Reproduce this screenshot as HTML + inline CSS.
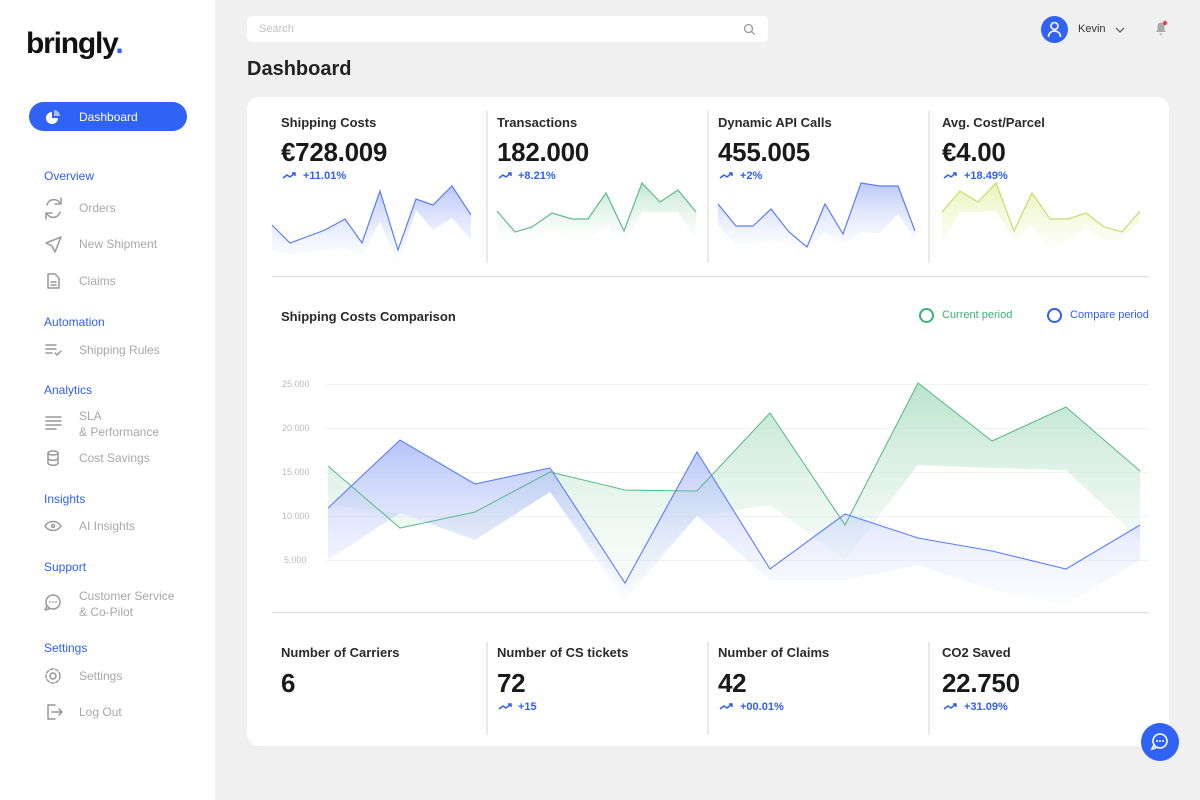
<!DOCTYPE html>
<html><head><meta charset="utf-8"><style>
*{margin:0;padding:0;box-sizing:border-box}
body{width:1200px;height:800px;background:#f0f0f0;font-family:"Liberation Sans",sans-serif;position:relative;overflow:hidden;color:#1a1a1a}
.a{position:absolute;white-space:nowrap}
.side{position:absolute;left:0;top:0;width:215px;height:800px;background:#fff}
.h{color:#2f5ff5;font-size:12px;left:44px}
.it{color:#a8a8a8;font-size:12px;left:79px}
.t{font-size:13px;font-weight:bold;color:#2a2a2a}
.big{font-size:26px;font-weight:bold;color:#1a1a1a;letter-spacing:-0.3px}
.pct{font-size:11px;font-weight:bold;color:#2f5ff5}
</style></head><body>
<div class="side">
<div class="a" style="left:26px;top:27px;font-size:30px;font-weight:bold;letter-spacing:-1.2px;color:#111">bringly<span style="color:#2f5ff5">.</span></div>
<div class="a" style="left:29px;top:102px;width:158px;height:29px;border-radius:15px;background:#2f62f5"></div>
<svg class="a" style="left:44px;top:108px" width="18" height="18" viewBox="0 0 18 18"><path d="M8 4A6 6 0 1 0 14 10H8Z" fill="#fff"/><path d="M10 2A6 6 0 0 1 16 8H10Z" fill="#a9bcfb"/></svg>
<div class="a" style="left:79px;top:110px;font-size:12px;color:#fff">Dashboard</div>
<div class="a h" style="top:169px">Overview</div>
<div class="a it" style="top:201px">Orders</div>
<div class="a it" style="top:237px">New Shipment</div>
<div class="a it" style="top:274px">Claims</div>
<div class="a h" style="top:315px">Automation</div>
<div class="a it" style="top:343px">Shipping Rules</div>
<div class="a h" style="top:383px">Analytics</div>
<div class="a it" style="top:408px;line-height:16px">SLA<br>&amp; Performance</div>
<div class="a it" style="top:451px">Cost Savings</div>
<div class="a h" style="top:492px">Insights</div>
<div class="a it" style="top:519px">AI Insights</div>
<div class="a h" style="top:560px">Support</div>
<div class="a it" style="top:588px;line-height:16px">Customer Service<br>&amp; Co-Pilot</div>
<div class="a h" style="top:641px">Settings</div>
<div class="a it" style="top:669px">Settings</div>
<div class="a it" style="top:705px">Log Out</div>
<svg class="a" style="left:0;top:0" width="215" height="800" fill="none" stroke="#999" stroke-width="1.5" stroke-linecap="round" stroke-linejoin="round">
<path d="M47 205a7 7 0 0 1 12-3l2 2M61 198v6h-6M60 212a7 7 0 0 1-12 3l-2-2M46 219v-6h6"/>
<path d="M46 243l15-6-6 15-3-6z"/>
<path d="M48 274h7l4 4v10h-11z M51 282h5M51 285h5"/>
<path d="M46 345h10M46 349h10M46 353h6M55 353l2 2 4-4"/>
<path d="M46 417h15M46 421h15M46 425h15M46 429h10"/>
<ellipse cx="53" cy="453" rx="5" ry="2"/><path d="M48 453v10c0 3 10 3 10 0v-10M48 458c0 3 10 3 10 0"/>
<path d="M45 526c4-6 12-6 16 0c-4 6-12 6-16 0z"/><circle cx="53" cy="526" r="1.5"/>
<circle cx="53" cy="602" r="7"/><path d="M47 606l-2 4 4-1"/>
<circle cx="53" cy="676" r="3"/><circle cx="53" cy="676" r="7" stroke-dasharray="3 2"/>
<path d="M55 705h-7v14h7M52 712h10M59 709l3 3-3 3"/>
</svg>
<svg class="a" style="left:0;top:0" width="215" height="800" fill="#999"><circle cx="50" cy="602" r=".9"/><circle cx="53" cy="602" r=".9"/><circle cx="56" cy="602" r=".9"/></svg>
</div>

<div class="a" style="left:247px;top:16px;width:521px;height:26px;background:#fff;border-radius:5px"></div>
<div class="a" style="left:259px;top:23px;font-size:11px;color:#c2c2c2">Search</div>
<svg class="a" style="left:743px;top:23px" width="13" height="13" fill="none" stroke="#999" stroke-width="1.3"><circle cx="5.5" cy="5.5" r="4"/><path d="M8.5 8.5l3 3"/></svg>
<div class="a" style="left:1041px;top:16px;width:27px;height:27px;border-radius:50%;background:#2f62f5"></div>
<svg class="a" style="left:1041px;top:16px" width="27" height="27" fill="none" stroke="#fff" stroke-width="1.6"><circle cx="13.5" cy="10" r="3.5"/><path d="M7.5 21c0-4 3-6 6-6s6 2 6 6"/></svg>
<div class="a" style="left:1078px;top:23px;font-size:11px;color:#333">Kevin</div>
<svg class="a" style="left:1115px;top:26px" width="11" height="8" fill="none" stroke="#666" stroke-width="1.3"><path d="M1 2l4 4 4-4"/></svg>
<svg class="a" style="left:1153px;top:19px" width="16" height="18"><path d="M3 13h10l-1.5-2V7a3.5 3.5 0 0 0-7 0v4z M6.5 14.5a1.5 1.5 0 0 0 3 0z" fill="#aaa"/><circle cx="12" cy="4" r="2.2" fill="#f0434a"/></svg>

<div class="a" style="left:247px;top:58px;font-size:20px;font-weight:bold;color:#222">Dashboard</div>

<div class="a" style="left:247px;top:97px;width:922px;height:649px;background:#fff;border-radius:12px"></div>

<div class="a t" style="left:281px;top:115px">Shipping Costs</div>
<div class="a t" style="left:497px;top:115px">Transactions</div>
<div class="a t" style="left:718px;top:115px">Dynamic API Calls</div>
<div class="a t" style="left:942px;top:115px">Avg. Cost/Parcel</div>
<div class="a big" style="left:281px;top:137px">€728.009</div>
<div class="a big" style="left:497px;top:137px">182.000</div>
<div class="a big" style="left:718px;top:137px">455.005</div>
<div class="a big" style="left:942px;top:137px">€4.00</div>
<div class="a pct" style="left:303px;top:170px">+11.01%</div>
<div class="a pct" style="left:518px;top:170px">+8.21%</div>
<div class="a pct" style="left:740px;top:170px">+2%</div>
<div class="a pct" style="left:964px;top:170px">+18.49%</div>

<div class="a t" style="left:281px;top:309px">Shipping Costs Comparison</div>
<div class="a" style="left:919px;top:308px;width:15px;height:15px;border-radius:50%;border:2px solid #3fae78"></div>
<div class="a" style="left:942px;top:309px;font-size:11px;color:#3fae78">Current period</div>
<div class="a" style="left:1047px;top:308px;width:15px;height:15px;border-radius:50%;border:2px solid #2f5ff5"></div>
<div class="a" style="left:1070px;top:309px;font-size:11px;color:#2f5ff5">Compare period</div>
<div class="a" style="left:282px;top:379px;font-size:9px;color:#bbb;line-height:11px">25.000</div>
<div class="a" style="left:282px;top:423px;font-size:9px;color:#bbb">20.000</div>
<div class="a" style="left:282px;top:467px;font-size:9px;color:#bbb">15.000</div>
<div class="a" style="left:282px;top:511px;font-size:9px;color:#bbb">10.000</div>
<div class="a" style="left:284px;top:555px;font-size:9px;color:#bbb">5.000</div>

<div class="a t" style="left:281px;top:645px">Number of Carriers</div>
<div class="a t" style="left:497px;top:645px">Number of CS tickets</div>
<div class="a t" style="left:718px;top:645px">Number of Claims</div>
<div class="a t" style="left:942px;top:645px">CO2 Saved</div>
<div class="a big" style="left:281px;top:668px">6</div>
<div class="a big" style="left:497px;top:668px">72</div>
<div class="a big" style="left:718px;top:668px">42</div>
<div class="a big" style="left:942px;top:668px">22.750</div>
<div class="a pct" style="left:518px;top:701px">+15</div>
<div class="a pct" style="left:740px;top:701px">+00.01%</div>
<div class="a pct" style="left:964px;top:701px">+31.09%</div>

<svg class="a" style="left:0;top:0" width="1200" height="800">
<defs>
<linearGradient id="gb" x1="0" y1="0" x2="0" y2="1"><stop offset="0" stop-color="#8ea4f7" stop-opacity=".6"/><stop offset="1" stop-color="#c8d3fb" stop-opacity="0"/></linearGradient>
<linearGradient id="gg" x1="0" y1="0" x2="0" y2="1"><stop offset="0" stop-color="#8fcfa9" stop-opacity=".55"/><stop offset="1" stop-color="#d8efe2" stop-opacity="0"/></linearGradient>
<linearGradient id="gy" x1="0" y1="0" x2="0" y2="1"><stop offset="0" stop-color="#d9ec8c" stop-opacity=".6"/><stop offset="1" stop-color="#eef7c9" stop-opacity=".1"/></linearGradient>
<linearGradient id="gb2" x1="0" y1="0" x2="0" y2="1"><stop offset="0" stop-color="#a8b8f9" stop-opacity=".85"/><stop offset="1" stop-color="#dfe5fd" stop-opacity=".1"/></linearGradient>
<linearGradient id="gg2" x1="0" y1="0" x2="0" y2="1"><stop offset="0" stop-color="#a9dcbf" stop-opacity=".8"/><stop offset="1" stop-color="#e9f6ee" stop-opacity=".2"/></linearGradient>
</defs>
<g stroke="#e2e2e2" stroke-width="1.5"><path d="M272 276.5H1149M272 612.5H1149M487 111V263M708 111V263M929 111V263M487 642V735M708 642V735M929 642V735"/></g>
<g stroke="#f3f3f3"><path d="M325 384.5H1149M325 428.5H1149M325 472.5H1149M325 516.5H1149M325 560.5H1149"/></g>
<g fill="none" stroke="#2f5ff5" stroke-width="1.5"><path d="M283 178l4-3 3 2 5-4M292 173h3v3"/><path d="M499 178l4-3 3 2 5-4M508 173h3v3"/><path d="M720 178l4-3 3 2 5-4M729 173h3v3"/><path d="M944 178l4-3 3 2 5-4M953 173h3v3"/><path d="M499 709l4-3 3 2 5-4M508 704h3v3"/><path d="M720 709l4-3 3 2 5-4M729 704h3v3"/><path d="M944 709l4-3 3 2 5-4M953 704h3v3"/></g>
<polygon fill="url(#gb)" points="272,225 290,243 325,230 345,219 362,243 380,191 398,250 416,199 433,205 452,186 471,215 471,240 452,218 433,230 416,210 398,265 380,222 362,255 345,248 325,250 290,255 272,250"/>
<polyline fill="none" stroke="#5b7ef6" stroke-width="1.2" points="272,225 290,243 325,230 345,219 362,243 380,191 398,250 416,199 433,205 452,186 471,215"/>
<polygon fill="url(#gg)" points="497,211 515,232 532,227 552,213 572,219 588,219 606,193 624,231 642,183 660,202 678,190 696,212 696,240 678,212 660,212 642,212 624,245 606,225 588,240 572,240 552,228 532,240 515,245 497,240"/>
<polyline fill="none" stroke="#5fbb8e" stroke-width="1.2" points="497,211 515,232 532,227 552,213 572,219 588,219 606,193 624,231 642,183 660,202 678,190 696,212"/>
<polygon fill="url(#gb)" points="718,204 736,226 753,226 771,209 789,232 807,247 825,204 843,234 861,183 880,186 898,186 915,231 915,240 898,214 880,233 861,232 843,245 825,232 807,252 789,245 771,240 753,245 736,245 718,225"/>
<polyline fill="none" stroke="#5b7ef6" stroke-width="1.2" points="718,204 736,226 753,226 771,209 789,232 807,247 825,204 843,234 861,183 880,186 898,186 915,231"/>
<polygon fill="url(#gy)" points="942,212 960,191 978,202 996,183 1014,231 1032,193 1050,219 1068,219 1086,213 1104,227 1122,232 1140,211 1140,222 1122,240 1104,240 1086,228 1068,240 1050,252 1032,225 1014,243 996,211 978,212 960,212 942,242"/>
<polyline fill="none" stroke="#c5dd6a" stroke-width="1.2" points="942,212 960,191 978,202 996,183 1014,231 1032,193 1050,219 1068,219 1086,213 1104,227 1122,232 1140,211"/>
<polygon fill="url(#gg2)" points="328,466 400,528 475,512 550,472 625,490 697,491 770,413 845,525 918,383 992,441 1066,407 1140,471 1140,540 1066,470 992,468 918,465 845,560 770,505 697,516 625,590 550,492 475,540 400,513 328,505"/>
<polygon fill="url(#gb2)" points="328,508 400,440 475,484 550,468 625,583 697,452 770,569 845,514 918,538 992,551 1066,569 1140,525 1140,560 1066,605 992,590 918,565 845,580 770,580 697,516 625,600 550,492 475,540 400,513 328,560"/>
<polyline fill="none" stroke="#5fbb8e" stroke-width="1.1" points="328,466 400,528 475,512 550,472 625,490 697,491 770,413 845,525 918,383 992,441 1066,407 1140,471"/>
<polyline fill="none" stroke="#5b7ef6" stroke-width="1.1" points="328,508 400,440 475,484 550,468 625,583 697,452 770,569 845,514 918,538 992,551 1066,569 1140,525"/>
<circle cx="1160" cy="742" r="19" fill="#2f62f5"/>
<g fill="none" stroke="#fff" stroke-width="1.6"><circle cx="1160" cy="741" r="7"/><path d="M1154 745l-2 4 4-1"/></g>
<g fill="#fff"><circle cx="1157" cy="741" r="1"/><circle cx="1160" cy="741" r="1"/><circle cx="1163" cy="741" r="1"/></g>
</svg>
</body></html>
